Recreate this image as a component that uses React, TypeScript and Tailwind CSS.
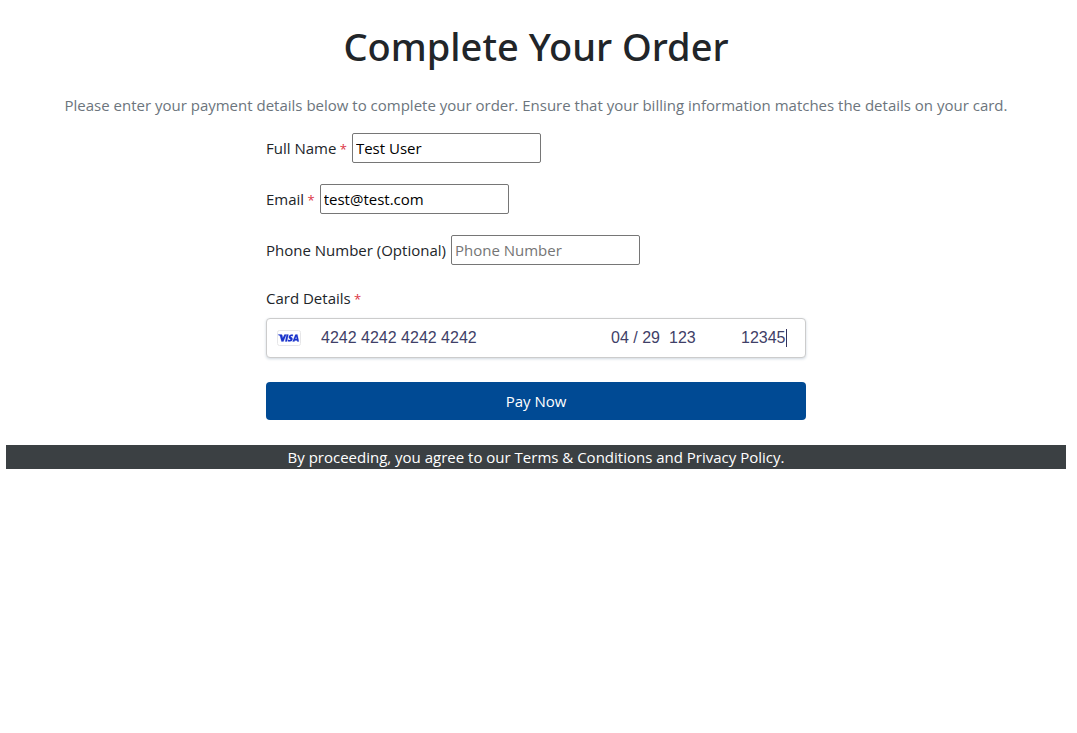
import type { InputHTMLAttributes } from 'react';

type FieldProps = InputHTMLAttributes<HTMLInputElement> & {
  id: string;
  label: string;
};

function Required() {
  return <span className="text-[13px] leading-none text-[#dc3545]"> *</span>;
}

function Field({ id, label, required, ...input }: FieldProps) {
  return (
    <div className="flex items-center gap-[5px]">
      <label htmlFor={id}>
        {label}
        {required && <Required />}
      </label>
      <input
        id={id}
        required={required}
        className="h-[30px] w-[189px] rounded-[2px] border border-[#767676] bg-white px-[3px] text-black outline-none placeholder:text-[#757575]"
        {...input}
      />
    </div>
  );
}

function VisaIcon() {
  return (
    <svg viewBox="0 0 24 17" className="h-[17px] w-6 shrink-0" role="img" aria-label="Visa">
      <rect x="0.5" y="0.5" width="23" height="15" rx="2" fill="#fff" stroke="#e6e6e8" />
      <g fill="#1a34cb" stroke="#1a34cb" strokeWidth="0.2" transform="translate(0 -0.5)">
        <path d="M1.3 5.1h3.1c.5 0 .8.2.9.6l.5 2.9L7.5 5.1h1.9L6.4 12H4.5L3 6.6c-.1-.4-.7-.8-1.7-1z" />
        <path d="M9.6 5.1h1.8L10 12H8.2z" />
        <path d="M16 5.3l-.3 1.5c-1-.4-2-.4-2 .1 0 .6 1.9.8 1.9 2.6 0 2.3-2.7 3-4.8 2.2l.3-1.5c1.2.5 2.5.5 2.5-.1 0-.7-1.8-.8-1.8-2.4 0-2.2 2.4-3.1 4.2-2.4z" />
        <path d="M18.7 5.1h1.7L21.9 12h-1.6l-.2-1h-2.3l-.4 1h-1.8l2.5-6.3c.1-.4.3-.6.6-.6zm.5 1.9-.9 2.5h1.4z" />
      </g>
    </svg>
  );
}

const cardInput = 'h-6 shrink-0 bg-transparent p-0 outline-none';

export default function App() {
  return (
    <main className="pt-[22px] pr-[11px] pl-1.5 font-['Segoe_UI','Open_Sans',sans-serif] text-[15px] leading-6 text-[#212529]">
      <header className="text-center">
        <h1 className="font-['Segoe_UI','Noto_Sans',sans-serif] text-[38px] leading-12 font-medium">
          Complete Your Order
        </h1>
        <p className="mt-[23px] text-[#6c757d]">
          Please enter your payment details below to complete your order. Ensure that your billing
          information matches the details on your card.
        </p>
      </header>

      <form
        className="mx-auto mt-4 flex max-w-[540px] flex-col gap-[21px]"
        onSubmit={(event) => event.preventDefault()}
      >
        <Field id="name" label="Full Name" defaultValue="Test User" required />
        <Field id="email" label="Email" type="email" defaultValue="test@test.com" required />
        <Field id="phone" label="Phone Number (Optional)" type="tel" placeholder="Phone Number" />

        <div>
          <label htmlFor="card-number">
            Card Details
            <Required />
          </label>
          <div className="mt-2 flex h-10 items-center rounded-[4px] border border-[#ccc] bg-white px-2.5 font-['Liberation_Sans',Arial,sans-serif] text-base text-[#3f3f68] shadow-[0_1px_3px_0_#cfd7df]">
            <VisaIcon />
            <input
              id="card-number"
              aria-label="Card number"
              className={`${cardInput} ml-5 w-40 grow`}
              defaultValue="4242 4242 4242 4242"
            />
            <input
              aria-label="Expiry date"
              className={`${cardInput} w-[58px]`}
              defaultValue="04 / 29"
            />
            <input aria-label="CVC" className={`${cardInput} w-[72px]`} defaultValue="123" />
            <div className="w-[54px]">
              <input
                aria-label="ZIP code"
                className="block h-[18px] w-[46px] border-r border-[#32325d] bg-transparent p-0 outline-none"
                defaultValue="12345"
              />
            </div>
          </div>
        </div>

        <button
          type="submit"
          className="mt-[3px] h-[38px] rounded-[4px] bg-[#004a94] text-white"
        >
          Pay Now
        </button>
      </form>

      <footer className="mt-[25px] bg-[#3b4043] text-center text-white">
        By proceeding, you agree to our <a href="#terms">Terms &amp; Conditions</a> and{' '}
        <a href="#privacy">Privacy Policy</a>.
      </footer>
    </main>
  );
}
